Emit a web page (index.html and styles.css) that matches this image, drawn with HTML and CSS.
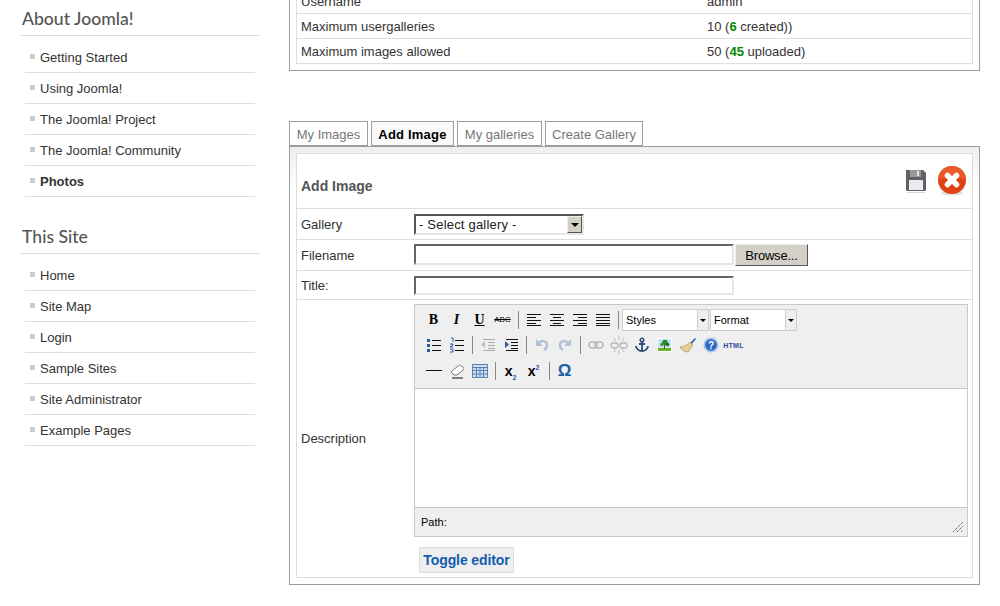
FILE: index.html
```html
<!DOCTYPE html>
<html>
<head>
	<meta charset="utf-8">
	<title>Add Image</title>
	<link rel="stylesheet" href="styles.css">
</head>
<body>
<div id="page">
	<div id="sidebar">
		<h3>About Joomla!</h3>
		<ul>
			<li>Getting Started</li>
			<li>Using Joomla!</li>
			<li>The Joomla! Project</li>
			<li>The Joomla! Community</li>
			<li class="current">Photos</li>
		</ul>
		<h3 class="second">This Site</h3>
		<ul>
			<li>Home</li>
			<li>Site Map</li>
			<li>Login</li>
			<li>Sample Sites</li>
			<li>Site Administrator</li>
			<li>Example Pages</li>
		</ul>
	</div>
	<div id="main">
		<div class="box">
			<table class="grid">
				<tr class="slim"><td class="label">Username</td><td>admin</td></tr>
				<tr class="slim"><td class="label">Maximum usergalleries</td><td>10 (<b>6</b> created))</td></tr>
				<tr class="slim"><td class="label">Maximum images allowed</td><td>50 (<b>45</b> uploaded)</td></tr>
			</table>
		</div>

		<div class="tabs">
			<div class="tab t1">My Images</div>
			<div class="tab t2 active">Add Image</div>
			<div class="tab t3">My galleries</div>
			<div class="tab t4">Create Gallery</div>
		</div>
		<div class="box panel">
			<table class="grid form">
				<tr class="title-row">
					<td colspan="2">
						<div class="title-bar">
							<strong>Add Image</strong>
							<div class="actions">
								<svg class="save" width="24" height="26" viewBox="0 0 24 26">
									<path d="M2 2h17l3 3v17l-1 1H3l-1-1z" fill="#5f6164"/>
									<path d="M6 2h11v7H6z" fill="#97999c"/>
									<path d="M13 3h2v5h-2z" fill="#e4e4e4"/>
									<path d="M5 12h14v10H5z" fill="#e9ebef"/>
									<path d="M3 24h18v1H3z" fill="#d8d8d8"/>
								</svg>
								<svg width="30" height="30" viewBox="0 0 30 30">
									<ellipse cx="15" cy="27" rx="11" ry="2.5" fill="#ddd"/>
									<circle cx="15" cy="14" r="14" fill="#dc4214"/>
									<path d="M1 14a14 14 0 0 1 28 0c-7-3-21-3-28 0z" fill="#ea5a28"/>
									<path d="M10.500 9.500l9 9M19.500 9.500l-9 9" stroke="#fff" stroke-width="5.500" stroke-linecap="round"/>
								</svg>
							</div>
						</div>
					</td>
				</tr>
				<tr class="field">
					<td class="label">Gallery</td>
					<td>
						<div class="select-box">
							<span class="select-text">- Select gallery -</span>
							<span class="select-arrow"></span>
						</div>
					</td>
				</tr>
				<tr class="field">
					<td class="label">Filename</td>
					<td>
						<div class="file-row">
							<input type="text" class="text-input">
							<button class="browse" type="button">Browse...</button>
						</div>
					</td>
				</tr>
				<tr class="field short">
					<td class="label">Title:</td>
					<td><input type="text" class="text-input title-input"></td>
				</tr>
				<tr>
					<td class="label">Description</td>
					<td class="editor-cell">
						<div class="editor">
							<div class="toolbar">
								<div class="tool-row">
									<span class="btn glyph serif">B</span>
									<span class="btn glyph serif ital">I</span>
									<span class="btn glyph serif under">U</span>
									<span class="btn glyph strike">ABC</span>
									<span class="sep"></span>
									<span class="btn"><svg width="16" height="14" viewBox="0 0 16 14"><path d="M1 1.5h14M1 4.5h9M1 7.5h14M1 10.5h9M1 12.5h14" stroke="#111"/></svg></span>
									<span class="btn"><svg width="16" height="14" viewBox="0 0 16 14"><path d="M1 1.5h14M4 4.5h8M1 7.5h14M4 10.5h8M1 12.5h14" stroke="#111"/></svg></span>
									<span class="btn"><svg width="16" height="14" viewBox="0 0 16 14"><path d="M1 1.5h14M6 4.5h9M1 7.5h14M6 10.5h9M1 12.5h14" stroke="#111"/></svg></span>
									<span class="btn"><svg width="16" height="14" viewBox="0 0 16 14"><path d="M1 1.5h14M1 4.5h14M1 7.5h14M1 10.5h14M1 12.5h14" stroke="#111"/></svg></span>
									<span class="sep"></span>
									<div class="combo first"><span class="combo-text">Styles</span><span class="combo-arrow"></span></div>
									<div class="combo"><span class="combo-text">Format</span><span class="combo-arrow"></span></div>
								</div>
								<div class="tool-row">
									<span class="btn"><svg width="16" height="16" viewBox="0 0 16 16"><path d="M1 2h3v3H1zM1 7h3v3H1zM1 12h3v3H1z" fill="#2a5a9c"/><path d="M6 3.5h9M6 8.5h9M6 13.5h9" stroke="#111"/></svg></span>
									<span class="btn"><svg width="16" height="16" viewBox="0 0 16 16"><path d="M2 1h2v4M1 7h3v1l-3 2h3M1 12h3v3H1" stroke="#2a5a9c" fill="none"/><path d="M6 3.5h9M6 8.5h9M6 13.5h9" stroke="#111"/></svg></span>
									<span class="sep"></span>
									<span class="btn off"><svg width="16" height="14" viewBox="0 0 16 14"><path d="M3 1.5h12M8 4.5h7M8 7.5h7M8 10.5h7M3 12.5h12" stroke="#111"/><path d="M1 6.5L5 3v7z" fill="#2a5a9c"/></svg></span>
									<span class="btn"><svg width="16" height="14" viewBox="0 0 16 14"><path d="M3 1.5h12M8 4.5h7M8 7.500h7M8 10.5h7M3 12.5h12" stroke="#111"/><path d="M6 6.5L2 3v7z" fill="#2a5a9c"/></svg></span>
									<span class="sep"></span>
									<span class="btn off"><svg width="16" height="14" viewBox="0 0 16 14"><path d="M4 6c3-4 9-4 9 1 0 2-1 4-3 5" fill="none" stroke="#2a5a9c" stroke-width="2.500"/><path d="M2 1v7h7z" fill="#2a5a9c"/></svg></span>
									<span class="btn off"><svg width="16" height="14" viewBox="0 0 16 14"><path d="M12 6C9 2 3 2 3 7c0 2 1 4 3 5" fill="none" stroke="#2a5a9c" stroke-width="2.500"/><path d="M14 1v7H7z" fill="#2a5a9c"/></svg></span>
									<span class="sep"></span>
									<span class="btn off"><svg width="16" height="12" viewBox="0 0 16 12"><rect x="1" y="3" width="8" height="6" rx="3" fill="none" stroke="#335" stroke-width="1.4"/><rect x="7" y="3" width="8" height="6" rx="3" fill="none" stroke="#335" stroke-width="1.4"/></svg></span>
									<span class="btn off"><svg width="18" height="18" viewBox="0 0 18 18"><rect x="1" y="7" width="7" height="5" rx="2.5" fill="none" stroke="#335" stroke-width="1.3"/><rect x="10" y="7" width="7" height="5" rx="2.5" fill="none" stroke="#335" stroke-width="1.3"/><path d="M9 0v4M9 14v4M4 2l2 3M14 2l-2 3M4 16l2-3M14 16l-2-3" stroke="#445"/></svg></span>
									<span class="btn"><svg width="16" height="16" viewBox="0 0 16 16"><circle cx="8" cy="3" r="1.8" fill="none" stroke="#2c4a78" stroke-width="1.4"/><path d="M8 5v9M5 7h6M2 9c0 3 3 5 6 5s6-2 6-5" fill="none" stroke="#2c4a78" stroke-width="1.8"/></svg></span>
									<span class="btn"><svg width="16" height="16" viewBox="0 0 16 16"><path d="M0 1h15v14H0z" fill="#fff"/><path d="M1 2h13v9H1z" fill="#bfe4f5"/><path d="M1 11h13v3H1z" fill="#6bb52b"/><path d="M7 8h1v4H7z" fill="#6d4a1e"/><circle cx="8" cy="5.500" r="2.800" fill="#2f8a2a"/><circle cx="5" cy="7.500" r="1.800" fill="#3c9c30"/><circle cx="10.500" cy="7.500" r="1.800" fill="#246f22"/></svg></span>
									<span class="btn"><svg width="18" height="16" viewBox="0 0 18 16"><path d="M11 6l5-5 1 1-5 6z" fill="#3a62a8"/><path d="M11 5l3 3-5 7c-3 0-7-2-8-5 3 0 7-2 10-5z" fill="#e3cf8f" stroke="#a08a4a" stroke-width=".6"/></svg></span>
									<span class="btn"><svg width="16" height="16" viewBox="0 0 16 16"><circle cx="8" cy="8" r="7.5" fill="#a9c4ec"/><circle cx="8" cy="8" r="5.8" fill="#2e67c0"/><text x="8" y="11.5" text-anchor="middle" class="help-mark">?</text></svg></span>
									<span class="btn html-mark">HTML</span>
								</div>
								<div class="tool-row">
									<span class="btn"><svg width="16" height="4" viewBox="0 0 16 4"><path d="M0 1.5h16" stroke="#111"/></svg></span>
									<span class="btn"><svg width="16" height="16" viewBox="0 0 16 16"><path d="M2 9l7-6c1-1 2-1 3 0l2 1c1 1 1 2 0 3l-6 5H5z" fill="#fff" stroke="#777"/><path d="M3 15h11" stroke="#111"/></svg></span>
									<span class="btn"><svg width="16" height="14" viewBox="0 0 16 14"><path d="M.5.5h15v13H.5z" fill="#cfe0f5" stroke="#5a7fb0"/><path d="M.5 3.5h15M.5 6.5h15M.5 10h15M4.500 3.5v10M8 3.500v10M11.500 3.500v10" stroke="#5a7fb0" fill="none"/></svg></span>
									<span class="sep"></span>
									<span class="btn glyph script"><span>x<sub>2</sub></span></span>
									<span class="btn glyph script"><span>x<sup>2</sup></span></span>
									<span class="sep"></span>
									<span class="btn omega">Ω</span>
								</div>
							</div>
							<div class="edit-area"></div>
							<div class="status">
								<span>Path:</span>
								<svg width="10" height="10" viewBox="0 0 10 10"><path d="M0 10L10 0M4 10l6-6M8 10l2-2" stroke="#666" stroke-dasharray="1.500 .7"/></svg>
							</div>
						</div>
						<div class="toggle">Toggle editor</div>
					</td>
				</tr>
			</table>
		</div>
	</div>
</div>
</body>
</html>
```

FILE: styles.css
```css
html,body{
	margin: 0;
	padding: 0;
	background: #fff;
	overflow: hidden;
}
body{
	font-family: "Liberation Sans", Arial, sans-serif;
	font-size: 13px;
	color: #333;
}
#page{
	display: flex;
	align-items: flex-start;
}

/* left menu */
#sidebar{
	width: 240px;
	padding: 0 29px 0 20px;
	flex: none;
}
#sidebar h3{
	margin: 0;
	height: 35px;
	line-height: 38px;
	padding-left: 2px;
	border-bottom: 1px solid #ddd;
	font-family: "Lato", sans-serif;
	font-size: 17.6px;
	font-weight: 500;
	color: #555;
	box-sizing: content-box;
}
#sidebar h3.second{
	margin-top: 21px;
}
#sidebar ul{
	list-style: none;
	margin: 6px 5px 0;
	padding: 0;
}
#sidebar li{
	height: 30px;
	display: flex;
	align-items: center;
	padding-left: 5px;
	border-bottom: 1px solid #ddd;
}
#sidebar li:before{
	content: "";
	width: 5px;
	height: 5px;
	margin: 0 5px 2px 0;
	background: #ccc;
}
#sidebar li.current{
	font-weight: bold;
}

/* right side */
#main{
	width: 691px;
	flex: none;
	margin-top: -19px;
}
.box{
	border: 1px solid #999f9f;
	padding: 6px;
	background: #fff;
}
.panel{
	background: linear-gradient(#eee,#fff 40px);
}
.grid{
	width: 100%;
	border-collapse: collapse;
	border: 1px solid #ddd;
	background: #fff;
}
.grid td{
	border-top: 1px solid #ddd;
	padding: 0 4px;
}
.grid .label{
	width: 109px;
}
.slim td{
	height: 24px;
}
.grid .slim .label{
	width: 398px;
}
.grid b{
	color: #080;
}

.tabs{
	display: flex;
	gap: 3px;
	margin-top: 50px;
}
.tab{
	box-sizing: border-box;
	height: 25px;
	line-height: 25px;
	border: 1px solid #999f9f;
	text-align: center;
	font-size: 13px;
	color: #777;
}
.t1{ width: 79px; }
.t2{ width: 83px; }
.t3{ width: 85px; }
.t4{ width: 98px; }
.tab.active{
	background: #f9f9f9;
	color: #000;
	font-weight: bold;
	letter-spacing: .2px;
}

.title-row td{
	height: 54px;
}
.title-bar{
	display: flex;
	justify-content: space-between;
}
.title-bar strong{
	align-self: flex-end;
	margin-bottom: 2px;
	font-size: 14px;
	color: #555;
}
.actions{
	display: flex;
	gap: 9px;
	align-items: flex-start;
	margin: -1px 1px 0 0;
}
.save{
	margin-top: 2px;
}

.field td{
	height: 30px;
}
.field.short td{
	height: 28px;
}
.select-box{
	box-sizing: border-box;
	width: 170px;
	height: 21px;
	display: flex;
	border: 2px solid;
	border-color: #555 #e8e6e0 #e8e6e0 #555;
	background: #fff;
}
.select-text{
	flex: 1;
	line-height: 17px;
	padding-left: 3px;
	font-size: 13px;
	letter-spacing: .2px;
	color: #222;
}
.select-arrow{
	width: 15px;
	background: #d4d0c8;
	border: 1px solid;
	border-color: #eee #555 #555 #eee;
	box-sizing: border-box;
	position: relative;
}
.select-arrow:after{
	content: "";
	position: absolute;
	left: 3px;
	top: 6px;
	border: 4px solid transparent;
	border-top: 4px solid #000;
	border-bottom: 0;
}
.file-row{
	display: flex;
	gap: 1px;
}
.text-input{
	box-sizing: border-box;
	width: 320px;
	height: 21px;
	margin: 0;
	padding: 0;
	display: block;
	border: 2px solid;
	border-color: #666 #e8e6e0 #e8e6e0 #666;
	background: #fff;
}
.title-input{
	height: 19px;
}
.browse{
	box-sizing: border-box;
	width: 73px;
	height: 22px;
	padding: 0;
	border: 1px solid;
	border-color: #eee #555 #555 #eee;
	background: #d4d0c8;
	font-family: "Liberation Sans", Arial, sans-serif;
	font-size: 13px;
	letter-spacing: -.2px;
	color: #000;
}

/* the editor */
.editor-cell{
	padding: 4px 4px 4px 4px !important;
}
.editor{
	box-sizing: border-box;
	width: 554px;
	border: 1px solid #c8c8c8;
	background: #fff;
}
.toolbar{
	height: 83px;
	padding-left: 7px;
	background: #efefef;
	border-bottom: 1px solid #c8c8c8;
	box-sizing: content-box;
}
.tool-row{
	display: flex;
	align-items: center;
	height: 26px;
}
.tool-row:first-child{
	height: 29px;
	margin-bottom: -2px;
}
.btn{
	width: 23px;
	height: 22px;
	flex: none;
	display: flex;
	align-items: center;
	justify-content: center;
}
.off{
	opacity: .3;
}
.glyph{
	font-weight: bold;
	font-size: 12px;
	color: #000;
}
.serif{
	font-family: "Liberation Serif", serif;
	font-size: 14px;
}
.ital{
	font-style: italic;
}
.under{
	text-decoration: underline;
}
.strike{
	font-size: 8px;
	font-weight: normal;
	text-decoration: line-through;
}
.script{
	font-size: 14px;
}
.script sub,.script sup{
	font-size: 7px;
	line-height: 0;
	color: #1d5ca8;
}
.omega{
	color: #1d5ca8;
	font-size: 17px;
	font-weight: bold;
}
.html-mark{
	color: #2b4a9a;
	font-size: 7px;
	font-weight: bold;
	letter-spacing: .3px;
}
.help-mark{
	font-family: "Liberation Sans", sans-serif;
	font-size: 10px;
	font-weight: bold;
	fill: #fff;
}
.sep{
	width: 1px;
	height: 18px;
	flex: none;
	margin: 0 3px 0 4px;
	background: #888;
}
.combo{
	box-sizing: border-box;
	width: 87px;
	height: 22px;
	margin-left: 1px;
	flex: none;
	display: flex;
	border: 1px solid #ccc;
	background: #fff;
	font-size: 11px;
	color: #000;
}
.combo.first{
	margin-left: 0;
}
.combo-text{
	flex: 1;
	line-height: 21px;
	padding-left: 3px;
}
.combo-arrow{
	width: 10px;
	background: #efefef;
	border-left: 1px solid #ccc;
	position: relative;
}
.combo-arrow:after{
	content: "";
	position: absolute;
	left: 2px;
	top: 9px;
	border: 3px solid transparent;
	border-top: 3px solid #000;
	border-bottom: 0;
}
.edit-area{
	height: 118px;
}
.status{
	height: 28px;
	border-top: 1px solid #c8c8c8;
	background: #efefef;
	display: flex;
	justify-content: space-between;
	align-items: center;
	padding: 0 4px 0 6px;
	font-size: 11px;
	color: #000;
}
.status svg{
	align-self: flex-end;
	margin-bottom: 4px;
}
.toggle{
	box-sizing: border-box;
	width: 95px;
	height: 26px;
	margin: 10px 0 0 5px;
	line-height: 25px;
	text-align: center;
	border: 1px solid #ddd;
	background: #eee;
	font-size: 14px;
	font-weight: bold;
	letter-spacing: -.1px;
	color: #135cae;
}
```
